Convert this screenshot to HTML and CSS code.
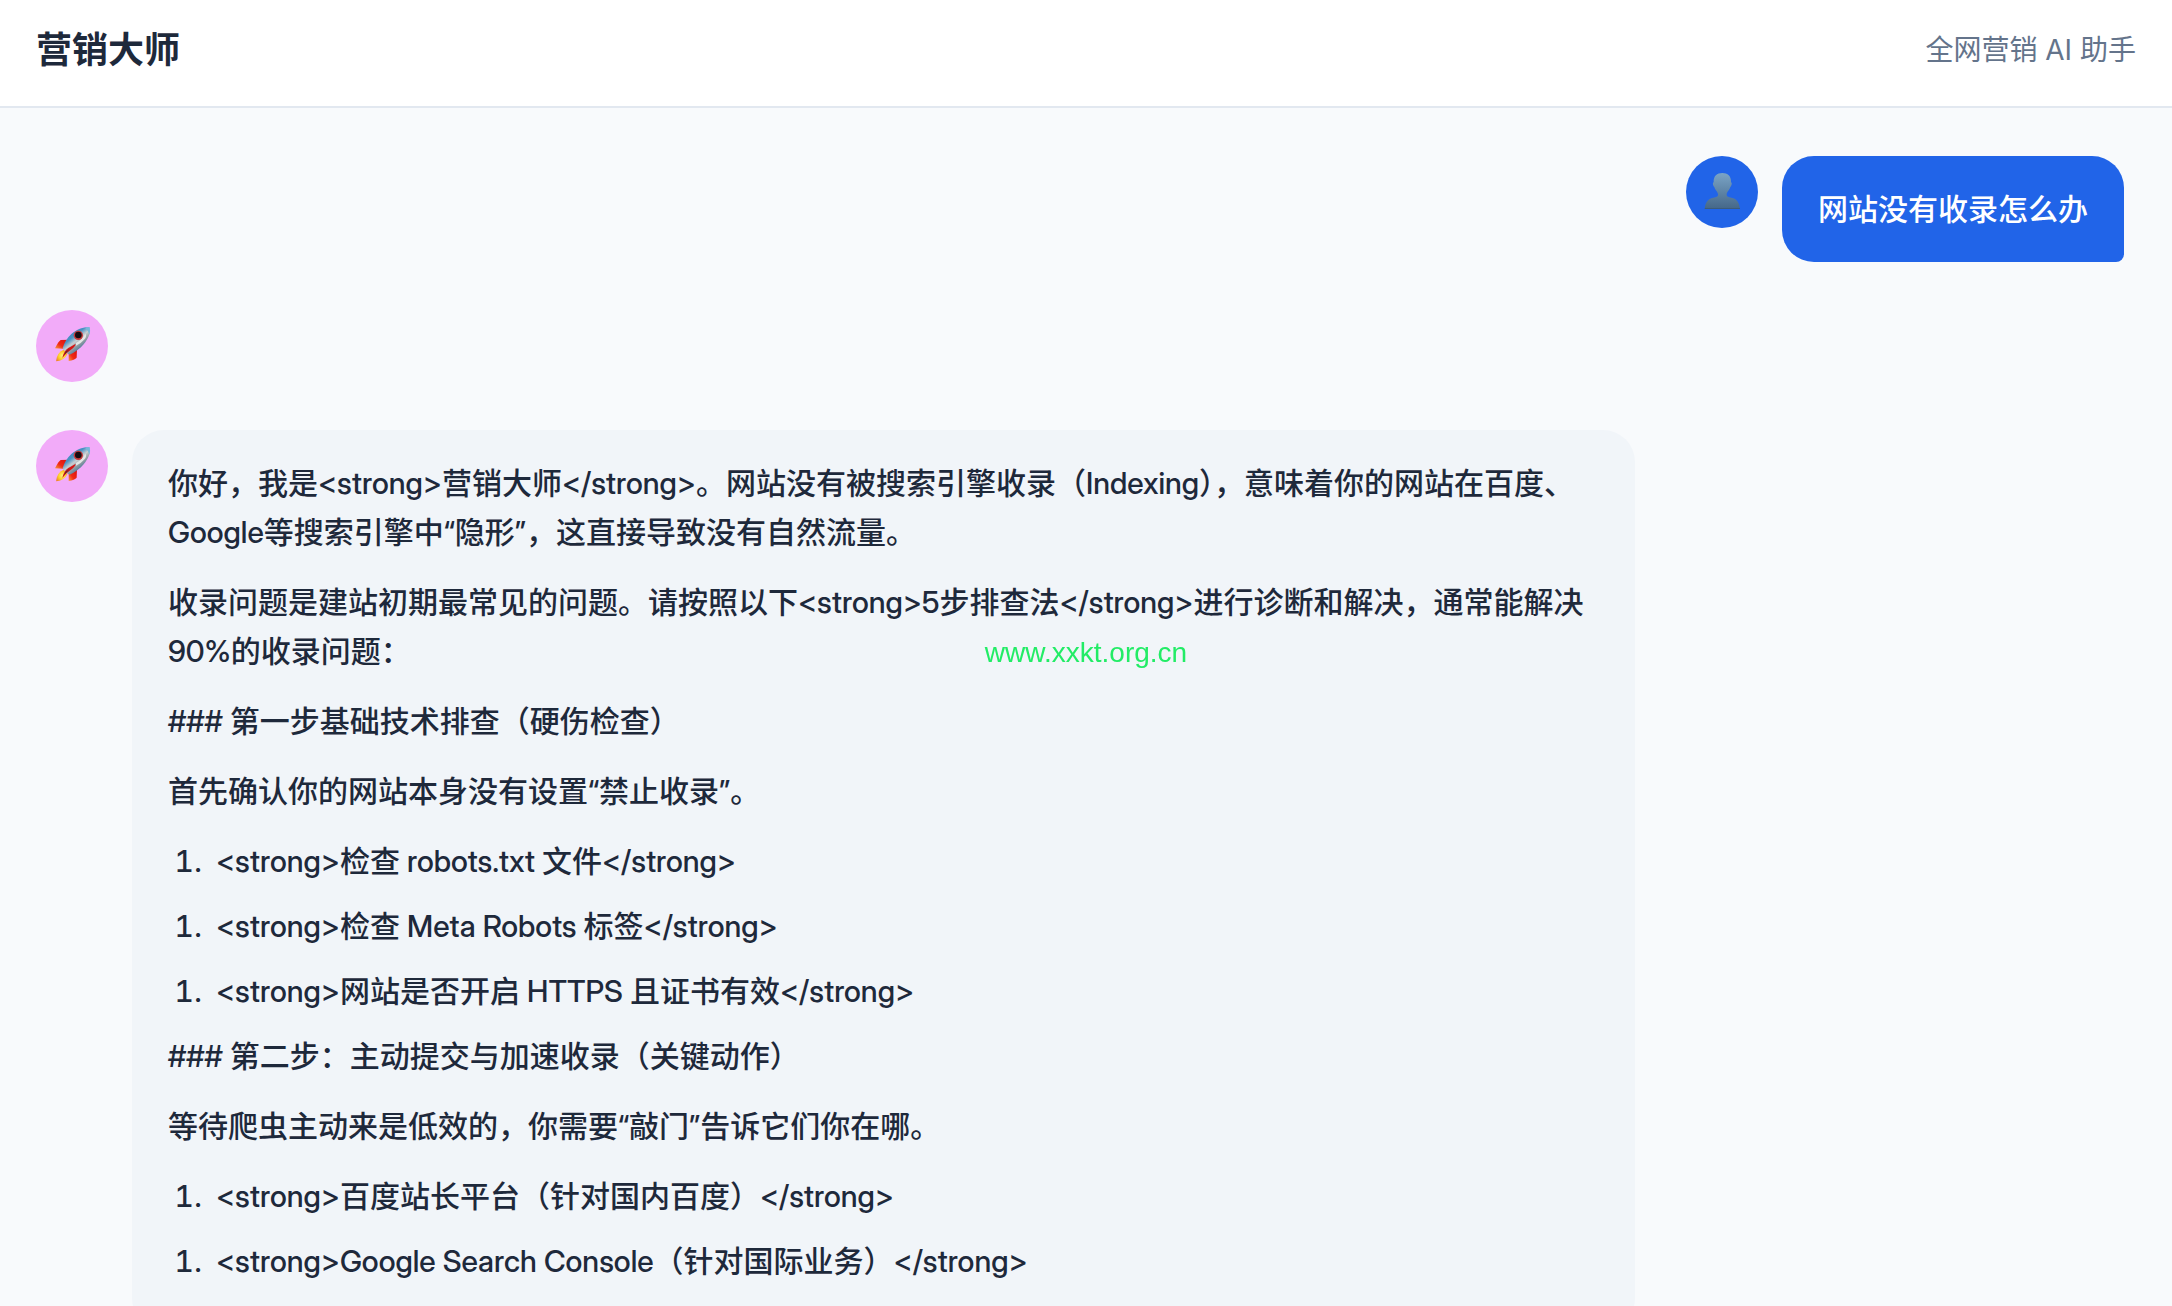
FILE: index.html
```html
<!DOCTYPE html>
<html lang="zh-CN">
<head>
    <meta charset="UTF-8">
    <meta name="viewport" content="width=device-width, initial-scale=1.0">
    <title>营销大师</title>
    <link rel="stylesheet" href="styles.css">
</head>
<body>
    <!-- Avatar drawings, shared by all messages -->
    <svg class="sprite" aria-hidden="true">
        <defs>
            <linearGradient id="hull" x1="0.2" y1="0.1" x2="0.75" y2="0.8">
                <stop offset="0" stop-color="#3b86bd"/>
                <stop offset="0.35" stop-color="#4b93c4"/>
                <stop offset="0.55" stop-color="#c9ced1"/>
                <stop offset="0.75" stop-color="#8d9aa2"/>
                <stop offset="1" stop-color="#2f6f9c"/>
            </linearGradient>
            <linearGradient id="fin" x1="1" y1="0" x2="0" y2="1">
                <stop offset="0" stop-color="#d80f0f"/>
                <stop offset="0.6" stop-color="#f02a16"/>
                <stop offset="1" stop-color="#f9a03c"/>
            </linearGradient>
            <radialGradient id="flame" cx="0.55" cy="0.5" r="0.6">
                <stop offset="0" stop-color="#fff27a"/>
                <stop offset="0.6" stop-color="#fbc926"/>
                <stop offset="1" stop-color="#f0872f"/>
            </radialGradient>
            <linearGradient id="bust" x1="0" y1="0" x2="0" y2="1">
                <stop offset="0" stop-color="#7ba4c6"/>
                <stop offset="1" stop-color="#456788"/>
            </linearGradient>
        </defs>
        <symbol id="rocket" viewBox="18 15 216 216">
            <path fill="url(#fin)" d="M116 104 L92 105 Q86 108 75 130 L100 131z"/>
            <path fill="url(#fin)" d="M141 132 L140 158 Q134 165 116 168 L116 146z"/>
            <path fill="url(#hull)" d="M179 67 C160 65 140 73 124 87 C112 98 102 115 98 129 Q104 144 119 149 C134 142 150 132 161 118 C175 101 182 86 179 67z"/>
            <path fill="#78b7dc" d="M165 68 Q174 65 179 67 Q182 76 178 89 Q175 76 165 68z"/>
            <path fill="#e3e6e6" d="M138 114 Q155 105 166 86 Q171 92 165 101 Q152 116 138 122z"/>
            <circle cx="145" cy="91" r="14" fill="#c8393a"/>
            <circle cx="145" cy="90" r="10" fill="#160d12"/>
            <path fill="url(#flame)" d="M101 134 Q80 143 78 169 Q102 168 112 148z"/>
            <path fill="#d41616" d="M137 116 Q135 126 122 135 Q108 143 97 159 Q101 139 115 129 Q124 124 137 116z"/>
            <path fill="#3c2a3a" d="M119 132 L103 149 L107 140z"/>
        </symbol>
        <symbol id="user" viewBox="18 18 216 216">
            <path fill="url(#bust)" d="M127 69 C143 69 154 78 153 97 C157 98 155 108 151 111 C148 121 140 126 140 133 Q139 140 148 142 C166 145 177 151 180 177 L74 177 C77 151 88 145 106 142 Q115 140 114 133 C114 126 106 121 103 111 C99 108 97 98 101 97 C100 78 111 69 127 69z"/>
            <path fill="#3d5c79" d="M75 174 L179 174 L180 177 L74 177z"/>
        </symbol>
    </svg>

    <div class="app">
        <header class="header">
            <h1 class="title">营销大师</h1>
            <span class="subtitle">全网营销 AI 助手</span>
        </header>

        <main class="chat">
            <div class="message user">
                <div class="avatar"><svg><use href="#user"/></svg></div>
                <div class="bubble"><p>网站没有收录怎么办</p></div>
            </div>

            <div class="message assistant">
                <div class="avatar"><svg><use href="#rocket"/></svg></div>
            </div>

            <div class="message assistant">
                <div class="avatar"><svg><use href="#rocket"/></svg></div>
                <div class="bubble">
                    <p>你好，我是&lt;strong&gt;营销大师&lt;/strong&gt;。网站没有被搜索引擎收录（Indexing），意味着你的网站在百度、Google等搜索引擎中“隐形”，这直接导致没有自然流量。</p>
                    <p>收录问题是建站初期最常见的问题。请按照以下&lt;strong&gt;5步排查法&lt;/strong&gt;进行诊断和解决，通常能解决90%的收录问题：</p>
                    <p>### 第一步基础技术排查（硬伤检查）</p>
                    <p>首先确认你的网站本身没有设置“禁止收录”。</p>
                    <ol><li>&lt;strong&gt;检查 robots.txt 文件&lt;/strong&gt;</li></ol>
                    <ol><li>&lt;strong&gt;检查 Meta Robots 标签&lt;/strong&gt;</li></ol>
                    <ol><li>&lt;strong&gt;网站是否开启 HTTPS 且证书有效&lt;/strong&gt;</li></ol>
                    <p>### 第二步：主动提交与加速收录（关键动作）</p>
                    <p>等待爬虫主动来是低效的，你需要“敲门”告诉它们你在哪。</p>
                    <ol><li>&lt;strong&gt;百度站长平台（针对国内百度）&lt;/strong&gt;</li></ol>
                    <ol><li>&lt;strong&gt;Google Search Console（针对国际业务）&lt;/strong&gt;</li></ol>
                </div>
            </div>
        </main>
    </div>

    <div class="watermark">www.xxkt.org.cn</div>
</body>
</html>
```
FILE: styles.css
```css
* {
    box-sizing: border-box;
    margin: 0;
    padding: 0;
}

body {
    background: #f8fafc;
    color: #1e293b;
    font-family: Inter, "Noto Sans CJK SC", sans-serif;
    font-size: 30px;
    line-height: 49px;
}

.sprite {
    position: absolute;
    width: 0;
    height: 0;
}

.app {
    display: flex;
    flex-direction: column;
    height: 100vh;
}

.header {
    display: flex;
    flex-shrink: 0;
    justify-content: space-between;
    align-items: center;
    padding: 26px 36px 31px;
    background: #ffffff;
    border-bottom: 2px solid #e2e8f0;
}

.title {
    font-size: 36px;
    font-weight: 600;
}

.subtitle {
    font-size: 28px;
    color: #64748b;
}

.chat {
    display: flex;
    flex: 1;
    flex-direction: column;
    gap: 48px;
    min-height: 0;
    padding: 48px 48px 48px 36px;
    overflow-y: auto;
    scrollbar-width: none;
}

.message {
    display: flex;
    flex-shrink: 0;
    align-items: flex-start;
    gap: 24px;
}

.message.user {
    justify-content: flex-end;
}

.avatar {
    flex-shrink: 0;
    width: 72px;
    height: 72px;
    border-radius: 50%;
    background: #f2abf9;
}

.user .avatar {
    background: #2164e8;
}

.avatar svg {
    display: block;
    width: 100%;
    height: 100%;
}

.bubble {
    max-width: 72%;
    padding: 29px 36px 28px;
    border-radius: 32px;
    background: #f1f5f9;
    font-family: "Inter Display", Inter, "Noto Sans CJK SC", sans-serif;
    font-weight: 500;
}

.user .bubble {
    background: #2164e8;
    color: #ffffff;
    border-bottom-right-radius: 8px;
}

.bubble p {
    margin-bottom: 21px;
}

.bubble p:last-child {
    margin-bottom: 0;
}

.bubble ol {
    padding-left: 42px;
}

.bubble li {
    margin-bottom: 16px;
    padding-left: 6px;
}

.watermark {
    position: fixed;
    top: 50%;
    left: 50%;
    transform: translate(-50%, -50%);
    font-family: "Liberation Sans", Arial, sans-serif;
    font-size: 28px;
    line-height: 32px;
    color: #22ec66;
    pointer-events: none;
}
```
